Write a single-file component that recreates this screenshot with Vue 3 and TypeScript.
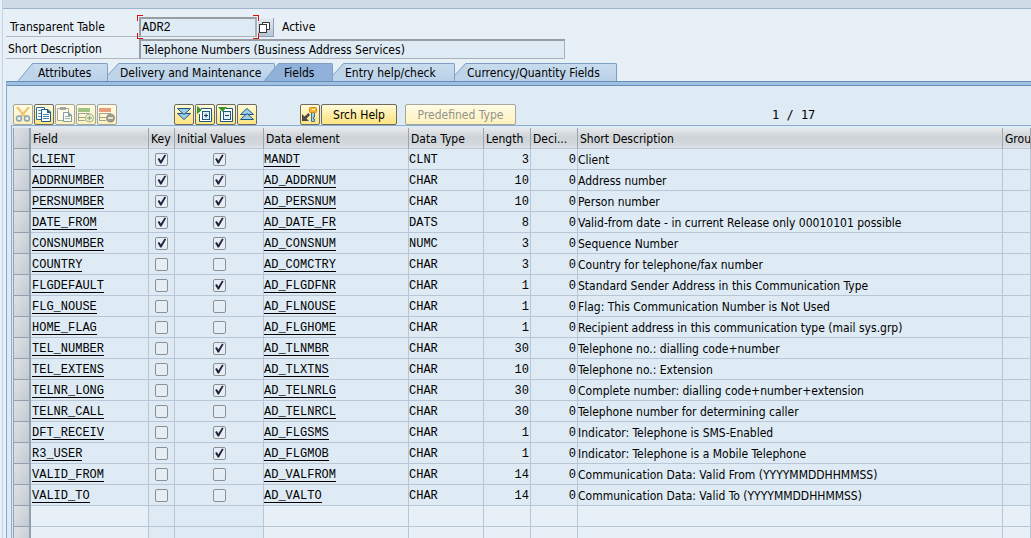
<script setup lang="ts">
import { ref } from 'vue'

interface FieldRow {
  name: string
  key: boolean
  initial: boolean
  element: string
  type: string
  length: number
  decimals: number
  text: string
}

function row(
  name: string,
  key: boolean,
  initial: boolean,
  element: string,
  type: string,
  length: number,
  text: string,
): FieldRow {
  return { name, key, initial, element, type, length, decimals: 0, text }
}

const rows = ref<FieldRow[]>([
  row('CLIENT', true, true, 'MANDT', 'CLNT', 3, 'Client'),
  row('ADDRNUMBER', true, true, 'AD_ADDRNUM', 'CHAR', 10, 'Address number'),
  row('PERSNUMBER', true, true, 'AD_PERSNUM', 'CHAR', 10, 'Person number'),
  row('DATE_FROM', true, true, 'AD_DATE_FR', 'DATS', 8, 'Valid-from date - in current Release only 00010101 possible'),
  row('CONSNUMBER', true, true, 'AD_CONSNUM', 'NUMC', 3, 'Sequence Number'),
  row('COUNTRY', false, false, 'AD_COMCTRY', 'CHAR', 3, 'Country for telephone/fax number'),
  row('FLGDEFAULT', false, true, 'AD_FLGDFNR', 'CHAR', 1, 'Standard Sender Address in this Communication Type'),
  row('FLG_NOUSE', false, false, 'AD_FLNOUSE', 'CHAR', 1, 'Flag: This Communication Number is Not Used'),
  row('HOME_FLAG', false, false, 'AD_FLGHOME', 'CHAR', 1, 'Recipient address in this communication type (mail sys.grp)'),
  row('TEL_NUMBER', false, true, 'AD_TLNMBR', 'CHAR', 30, 'Telephone no.: dialling code+number'),
  row('TEL_EXTENS', false, true, 'AD_TLXTNS', 'CHAR', 10, 'Telephone no.: Extension'),
  row('TELNR_LONG', false, true, 'AD_TELNRLG', 'CHAR', 30, 'Complete number: dialling code+number+extension'),
  row('TELNR_CALL', false, false, 'AD_TELNRCL', 'CHAR', 30, 'Telephone number for determining caller'),
  row('DFT_RECEIV', false, true, 'AD_FLGSMS', 'CHAR', 1, 'Indicator: Telephone is SMS-Enabled'),
  row('R3_USER', false, true, 'AD_FLGMOB', 'CHAR', 1, 'Indicator: Telephone is a Mobile Telephone'),
  row('VALID_FROM', false, false, 'AD_VALFROM', 'CHAR', 14, 'Communication Data: Valid From (YYYYMMDDHHMMSS)'),
  row('VALID_TO', false, false, 'AD_VALTO', 'CHAR', 14, 'Communication Data: Valid To (YYYYMMDDHHMMSS)'),
])

const tabs: string[] = [
  'Attributes',
  'Delivery and Maintenance',
  'Fields',
  'Entry help/check',
  'Currency/Quantity Fields',
]
const activeTab = ref('Fields')
const tableName = ref('ADR2')
const description = ref('Telephone Numbers (Business Address Services)')
</script>

<template>
  <div class="window">
    <div class="topbar"></div>

    <form class="head" @submit.prevent>
      <div class="line">
        <label class="caption indent" for="table-name">Transparent Table</label>
        <div class="focus-box">
          <input id="table-name" v-model="tableName" class="box mono" type="text" />
          <i class="corner tl"></i><i class="corner tr"></i><i class="corner bl"></i><i class="corner br"></i>
        </div>
        <button class="match" type="button" aria-label="Choose table">
          <svg viewBox="0 0 15 19" width="15" height="19">
            <path d="M4.500 7V4.500H11.500V11.500H9" fill="#fff" stroke="#333" />
            <rect x="1.500" y="6.500" width="7" height="8" fill="#fff" stroke="#333" />
          </svg>
        </button>
        <span class="status">Active</span>
      </div>
      <div class="line">
        <label class="caption" for="short-text">Short Description</label>
        <input id="short-text" v-model="description" class="box wide" type="text" />
      </div>
    </form>

    <div class="tabs" role="tablist">
      <button
        v-for="(tab, i) in tabs"
        :key="tab"
        class="tab"
        :class="{ active: tab === activeTab }"
        type="button"
        role="tab"
        :aria-selected="tab === activeTab"
        @click="activeTab = tab"
      >
        <svg v-if="i === 0 || tab === activeTab" class="slant" viewBox="0 0 16 18" width="16" height="18">
          <path class="fill" d="M0 18L15 0H16V18Z" />
          <path class="edge" d="M0 18L14.500 0.500H16" />
        </svg>
        <svg v-else class="slant" viewBox="0 0 12 18" width="12" height="18">
          <path class="fill" d="M0 18V12L11 0H12V18Z" />
          <path class="edge" d="M0 12L10.500 0.500H12" />
        </svg>
        <span class="tab-text">{{ tab }}</span>
      </button>
    </div>

    <section class="panel">
      <div class="toolbar">
        <div class="group">
          <button class="tool" type="button" disabled aria-label="Cut">
            <svg viewBox="0 0 18 19" width="18" height="19">
              <path d="M3 2L11.500 12M15 2L6.500 12" stroke="#e7a02a" stroke-width="2.500" fill="none" />
              <circle cx="5" cy="13.500" r="2.500" fill="#dcebf5" stroke="#25699d" stroke-width="1.500" />
              <circle cx="13" cy="13.500" r="2.500" fill="#dcebf5" stroke="#25699d" stroke-width="1.500" />
            </svg>
          </button>
          <button class="tool" type="button" aria-label="Copy">
            <svg viewBox="0 0 18 19" width="18" height="19">
              <path d="M1.500 2.500H9.500V14.500H1.500Z" fill="#fff" stroke="#2b6c9c" />
              <path d="M3 5.500H6M3 8.500H6M3 11.500H6" stroke="#5c93ba" />
              <path d="M6.500 4.500H13L15.500 7V16.500H6.500Z" fill="#fff" stroke="#15588c" />
              <path d="M12 4V8H16Z" fill="#15588c" />
              <path d="M8 9.500H14M8 11.500H14M8 13.500H14" stroke="#4285b1" />
            </svg>
          </button>
          <button class="tool" type="button" disabled aria-label="Paste">
            <svg viewBox="0 0 18 19" width="18" height="19">
              <path d="M1.500 3.500H12.500V15.500H1.500Z" fill="#fff" stroke="#57646e" />
              <rect x="4" y="2" width="6" height="3" fill="#57646e" />
              <path d="M7.500 7.500H13L15.500 10V16.500H7.500Z" fill="#fff" stroke="#15588c" />
              <path d="M12 7V11H16Z" fill="#15588c" />
              <path d="M9 11.500H14M9 13.500H14" stroke="#4285b1" />
            </svg>
          </button>
          <button class="tool" type="button" disabled aria-label="Insert row">
            <svg viewBox="0 0 18 19" width="18" height="19">
              <rect x="1" y="3" width="12" height="4" fill="#549b35" />
              <path d="M1 8.500H13M1 12.500H8M1 15.500H8M1.500 8V16" stroke="#566470" fill="none" />
              <circle cx="12.500" cy="13" r="4" fill="#fff" stroke="#3f7a35" />
              <path d="M10 13H15M12.500 10.500V15.500" stroke="#3f7a35" stroke-width="1.500" />
            </svg>
          </button>
          <button class="tool" type="button" disabled aria-label="Delete row">
            <svg viewBox="0 0 18 19" width="18" height="19">
              <rect x="1" y="3" width="12" height="4" fill="#d6532b" />
              <path d="M1 8.500H13M1 12.500H8M1 15.500H8M1.500 8V16" stroke="#566470" fill="none" />
              <circle cx="12.500" cy="13" r="4.500" fill="#4c5157" />
              <path d="M10 13H15" stroke="#fff" stroke-width="1.500" />
            </svg>
          </button>
        </div>
        <div class="group second">
          <button class="tool" type="button" aria-label="Expand all">
            <svg viewBox="0 0 18 19" width="18" height="19">
              <path d="M2.500 8.500H15.500L9 14.500Z" fill="#9fcdea" stroke="#1d5885" />
              <path d="M2.500 3.500H15.500L9 9.500Z" fill="#9fcdea" stroke="#1d5885" />
            </svg>
          </button>
          <button class="tool" type="button" aria-label="Expand include">
            <svg viewBox="0 0 18 19" width="18" height="19">
              <path d="M5 3.500H15.500V16.500H3.500V9" fill="#fff" stroke="#1d5885" />
              <rect x="6.500" y="6.500" width="7" height="8" fill="#e1f0fa" stroke="#1d5885" />
              <path d="M8 10.500H12M10 8.500V12.500" stroke="#173f5f" />
              <path d="M1 1V9L6 5Z" fill="#37952a" />
            </svg>
          </button>
          <button class="tool" type="button" aria-label="Collapse include">
            <svg viewBox="0 0 18 19" width="18" height="19">
              <path d="M9 3.500H15.500V16.500H3.500V6" fill="#fff" stroke="#1d5885" />
              <rect x="6.500" y="6.500" width="7" height="8" fill="#e1f0fa" stroke="#1d5885" />
              <path d="M8 10.500H12" stroke="#173f5f" />
              <path d="M1 2H10L5.500 7Z" fill="#37952a" />
            </svg>
          </button>
          <button class="tool" type="button" aria-label="Collapse all">
            <svg viewBox="0 0 18 19" width="18" height="19">
              <path d="M2.500 9.500H15.500L9 3.500Z" fill="#9fcdea" stroke="#1d5885" />
              <path d="M2.500 14.500H15.500L9 8.500Z" fill="#9fcdea" stroke="#1d5885" />
            </svg>
          </button>
        </div>
        <div class="group third">
          <button class="tool" type="button" aria-label="Foreign keys">
            <svg viewBox="0 0 18 19" width="18" height="19">
              <path d="M1 9V16H8L5.500 13.500L9 10L7.500 8L3.500 11.500Z" fill="#4a4a4a" />
              <path d="M10.500 7V16.500H13.500V14H12.500V12H13.500V7Z" fill="#a6d0ea" stroke="#36749e" />
              <rect x="8.500" y="2.500" width="7" height="5" rx="1" fill="#f9b52d" stroke="#d88712" />
              <rect x="11" y="4" width="3" height="1" fill="#fff" />
            </svg>
          </button>
          <button class="tool srch" type="button">Srch Help</button>
        </div>
        <button class="tool predefined" type="button" disabled>Predefined Type</button>
        <output class="position">1 / 17</output>
      </div>

      <div class="grid">
        <table>
          <colgroup>
            <col class="w-sel" /><col class="w-field" /><col class="w-key" /><col class="w-init" />
            <col class="w-element" /><col class="w-type" /><col class="w-num" /><col class="w-num" />
            <col class="w-text" /><col />
          </colgroup>
          <thead>
            <tr>
              <th class="sel" aria-label="Selection"></th>
              <th>Field</th>
              <th>Key</th>
              <th>Initial Values</th>
              <th>Data element</th>
              <th>Data Type</th>
              <th>Length</th>
              <th>Deci...</th>
              <th>Short Description</th>
              <th>Grou</th>
            </tr>
          </thead>
          <tbody>
            <tr v-for="r in rows" :key="r.name">
              <td class="sel"></td>
              <td class="mono name"><a href="#">{{ r.name }}</a></td>
              <td class="tick"><input v-model="r.key" type="checkbox" :aria-label="`${r.name} key`" /></td>
              <td class="tick"><input v-model="r.initial" type="checkbox" :aria-label="`${r.name} initial value`" /></td>
              <td class="mono"><a href="#">{{ r.element }}</a></td>
              <td class="mono">{{ r.type }}</td>
              <td class="mono num">{{ r.length }}</td>
              <td class="mono num">{{ r.decimals }}</td>
              <td>{{ r.text }}</td>
              <td></td>
            </tr>
            <tr v-for="n in 2" :key="n" class="empty">
              <td class="sel"></td>
              <td></td>
              <td class="tick"></td>
              <td class="tick"></td>
              <td v-for="c in 6" :key="c"></td>
            </tr>
          </tbody>
        </table>
      </div>
    </section>
  </div>
</template>

<style>
body {
  margin: 0;
  background: #e8f0f7;
}
</style>

<style scoped>
.window {
  box-sizing: border-box;
  height: 100vh;
  overflow: hidden;
  display: flex;
  flex-direction: column;
  margin-left: 2px;
  border-left: 1px solid #c3d2e4;
  background: #e8f0f7;
  color: #000;
  font: 12px/16px Tahoma, "DejaVu Sans Condensed", "DejaVu Sans", sans-serif;
}
.window * {
  box-sizing: border-box;
}
button,
input {
  font: inherit;
  color: inherit;
  margin: 0;
}
.topbar {
  flex: none;
  height: 9px;
  background: #cedce7;
  border-bottom: 1px solid #9fb4cb;
}
.head {
  flex: none;
  padding: 7px 0 0 3px;
}
.line {
  display: flex;
  align-items: center;
  height: 22px;
}
.caption {
  width: 133px;
  height: 20px;
  padding: 2px 0 0 2px;
  border-bottom: 1px solid #b3b8bd;
  white-space: nowrap;
}
.caption.indent {
  padding-left: 4px;
}
.box {
  width: 118px;
  height: 20px;
  padding: 0 2px;
  border: 2px solid #a9b0b6;
  border-top-color: #969da3;
  border-left-color: #969da3;
  border-width: 2px 1px 1px 2px;
  background: #deebf5;
  outline: none;
}
.mono {
  font-family: "Courier New", "Liberation Mono", monospace;
}
.box.mono {
  padding: 1px 1px 0;
  border-right-width: 2px;
}
.box.wide {
  width: 426px;
}
.focus-box {
  position: relative;
  display: flex;
}
.corner {
  position: absolute;
  width: 6px;
  height: 6px;
  border: 0 solid #d8120c;
}
.tl {
  top: -2px;
  left: -2px;
  border-width: 1px 0 0 1px;
}
.tr {
  top: -2px;
  right: -2px;
  border-width: 1px 1px 0 0;
}
.bl {
  bottom: -2px;
  left: -2px;
  border-width: 0 0 1px 1px;
}
.br {
  bottom: -2px;
  right: -2px;
  border-width: 0 1px 1px 0;
}
.match {
  width: 16px;
  height: 19px;
  margin-left: 1px;
  padding: 0;
  border: 0;
  border-right: 1px solid #8fa0b4;
  border-bottom: 1px solid #8fa0b4;
  background: linear-gradient(#e3eaf2, #b8c6d8);
}
.match svg {
  display: block;
}
.status {
  margin-left: 8px;
}

.tabs {
  flex: none;
  display: flex;
  height: 21px;
  padding: 3px 0 0 15px;
}
.tab {
  display: flex;
  height: 18px;
  padding: 0;
  border: 0;
  background: none;
}
.tab:nth-child(1) { width: 90px; }
.tab:nth-child(2) { width: 167px; }
.tab:nth-child(3) { width: 69px; }
.tab:nth-child(4) { width: 122px; }
.tab:nth-child(5) { width: 162px; }
.slant {
  flex: none;
}
.fill {
  fill: #bed4e9;
}
.edge {
  fill: none;
  stroke: #7f9fc2;
}
.tab-text {
  flex: 1;
  height: 18px;
  padding-top: 1px;
  border-top: 1px solid #7f9fc2;
  border-right: 1px solid #7f9fc2;
  border-radius: 0 2px 0 0;
  background: linear-gradient(#c9dcee, #b9d0e7);
  text-align: left;
  white-space: nowrap;
}
.tab:first-child .tab-text {
  padding-left: 4px;
}
.tab.active {
  position: relative;
  margin-left: -11px;
}
.tab.active .tab-text {
  padding-left: 4px;
  background: #8fb1da;
}
.tab.active .fill {
  fill: #8fb1da;
}

.panel {
  flex: 1;
  min-height: 0;
  display: flex;
  flex-direction: column;
  margin-left: 3px;
  border-left: 1px solid #86a8cc;
  border-top: 1px solid #648db9;
  background: #deebf5;
}
.panel::before {
  content: "";
  flex: none;
  height: 3px;
  background: #a0c0e2;
  border-bottom: 1px solid #648db9;
}
.toolbar {
  flex: none;
  display: flex;
  align-items: flex-end;
  height: 40px;
  padding-left: 6px;
}
.group {
  display: flex;
  gap: 1px;
}
.second {
  margin-left: 57px;
}
.third {
  margin-left: 43px;
}
.tool {
  display: flex;
  align-items: center;
  justify-content: center;
  width: 20px;
  height: 21px;
  padding: 0;
  border: 1px solid #6f6a5c;
  border-radius: 2px;
  background: linear-gradient(#fffbdc, #fdeb9c 60%, #fce583);
  white-space: nowrap;
}
.tool:disabled {
  border-color: #a5a59b;
  background: linear-gradient(#fffce6, #fdf1bd);
  color: #93938e;
}
.tool:disabled svg {
  opacity: 0.55;
}
.srch {
  width: 76px;
}
.predefined {
  width: 111px;
  margin-left: 8px;
}
.position {
  margin-left: 256px;
  padding-bottom: 2px;
  font-family: "DejaVu Sans Mono", monospace;
}

.grid {
  flex: 1;
  min-height: 0;
  overflow: hidden;
  margin-left: 4px;
  padding: 2px 0 0 1px;
  border: 0 solid #8dabcd;
  border-width: 1px 0 0 1px;
}
.toolbar {
  height: 39px;
}
table {
  width: 100%;
  table-layout: fixed;
  border-collapse: separate;
  border-spacing: 0;
}
.w-sel { width: 18px; }
.w-field { width: 118px; }
.w-key { width: 26px; }
.w-init { width: 89px; }
.w-element { width: 145px; }
.w-type { width: 75px; }
.w-num { width: 47px; }
.w-text { width: 425px; }
th,
td {
  height: 21px;
  padding: 2px 0 0;
  overflow: hidden;
  border: 0 solid #b9c6d6;
  border-width: 0 1px 1px 0;
  line-height: 16px;
  white-space: nowrap;
  text-align: left;
  vertical-align: middle;
}
th {
  padding-left: 2px;
  border-right-color: #9aa5b2;
  background: linear-gradient(#e6e9ec, #ced3d7 45%, #d3d8dd 80%, #dfe3e7);
  font-weight: normal;
}
td.name {
  padding-left: 1px;
}
td.sel,
th.sel {
  padding: 0;
  border-left: 1px solid #93a0ae;
  border-right: 2px solid #93a0ae;
  border-bottom: 1px solid #93a0ae;
  background: linear-gradient(120deg, #dfe3e8, #c3c9d0);
}
.empty td {
  background: #e8f0f7;
}
.empty td.tick {
  background: #deebf5;
}
.empty td.sel {
  background: linear-gradient(120deg, #dfe3e8, #c3c9d0);
}
td.num {
  padding-right: 1px;
  text-align: right;
}
a {
  display: block;
  width: max-content;
  height: 14px;
  border-bottom: 1px solid #000;
  color: #000;
  line-height: 14px;
  text-decoration: none;
}
td.tick {
  padding: 0;
  text-align: center;
}
.tick input {
  appearance: none;
  display: block;
  width: 13px;
  height: 13px;
  margin: 0 auto;
  border: 1px solid #8d8f93;
  border-radius: 2px;
  background: #e6eef5;
}
.tick input:checked::before {
  content: "";
  display: block;
  width: 11px;
  height: 11px;
  background: #23233f;
  clip-path: polygon(15% 50%, 30% 42%, 44% 64%, 78% 10%, 92% 16%, 50% 92%, 38% 92%);
}
</style>
